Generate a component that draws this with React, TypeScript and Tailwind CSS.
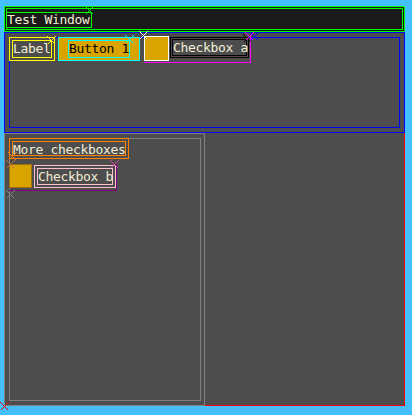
import React from "react";

const FONT = { fontFamily: '"DejaVu Sans Mono", "Liberation Mono", monospace' };

function Cross({ x, y, color }: { x: number; y: number; color: string }) {
  return (
    <svg
      className="absolute pointer-events-none"
      style={{ left: x - 4, top: y - 4 }}
      width={9}
      height={9}
      viewBox="0 0 9 9"
      shapeRendering="crispEdges"
    >
      <line x1="0.5" y1="0.5" x2="8.5" y2="8.5" stroke={color} strokeWidth="1" />
      <line x1="8.5" y1="0.5" x2="0.5" y2="8.5" stroke={color} strokeWidth="1" />
    </svg>
  );
}

export default function App() {
  return (
    <div
      className="relative w-[412px] h-[415px] overflow-hidden bg-[#44bfff] pl-[4px] pt-[6px] text-[13px] tracking-[-0.33px] text-[#f2eed6]"
      style={FONT}
    >
      <div className="w-[401px] flex flex-col">
        {/* Title bar */}
        <div className="h-[26px] border border-[#00ff00] bg-[#1a1a1a] p-px">
          <div className="h-full border border-[#00ff00]">
            <div className="-ml-px mt-[3px] w-[86px] h-[16px] border border-[#00ff00] leading-[14px] whitespace-nowrap">
              Test Window
            </div>
          </div>
        </div>

        {/* Body */}
        <div className="h-[374px] bg-[#4d4d4d] flex flex-col">
          {/* Top panel */}
          <div className="h-[101px] border border-[#0000ff] p-[4px]">
            <div className="h-full border border-[#0000ff]">
              <div className="-ml-px -mt-px flex items-start">
                <div className="w-[46px] h-[24px] border border-[#ffff00] p-[2px]">
                  <div className="h-full border border-[#ffff00] leading-[16px] whitespace-nowrap">
                    Label
                  </div>
                </div>
                <div className="ml-[3px] w-[82px] h-[24px] border border-[#00ffff] bg-[#daa400] px-[9px] py-[2px]">
                  <div className="h-full border border-[#00ffff] leading-[16px] whitespace-nowrap text-black">
                    Button 1
                  </div>
                </div>
                <div className="ml-[4px] -mt-px w-[107px] h-[27px] border-b border-r border-[#ff00ff] flex items-start">
                  <div className="w-[25px] h-[25px] border border-white bg-[#daa400]" />
                  <div className="ml-[1px] mt-px w-[79px] h-[21px] border border-black p-px">
                    <div className="h-full border border-black leading-[15px] whitespace-nowrap">
                      Checkbox a
                    </div>
                  </div>
                </div>
              </div>
            </div>
          </div>

          {/* Bottom area */}
          <div className="h-[274px] flex">
            <div className="w-[201px] h-full border border-[#808080] pl-[4px] pt-[4px] pr-[3px] pb-[4px]">
              <div className="h-full border border-[#808080]">
                <div className="-ml-px -mt-px flex flex-col items-start">
                  <div className="w-[120px] h-[21px] border border-[#ff8000] px-[2px] py-[2px]">
                    <div className="h-full border border-[#ff8000] leading-[15px] whitespace-nowrap">
                      More checkboxes
                    </div>
                  </div>
                  <div className="mt-[5px] w-[108px] h-[27px] border-b border-r border-[#800080] flex items-start">
                    <div className="w-[24px] h-[24px] border border-[#9c6e10] bg-[#daa400]" />
                    <div className="ml-[2px] mt-px w-[82px] h-[23px] border border-[#ffc0cb] p-[2px]">
                      <div className="h-full border border-[#ffc0cb] leading-[16px] whitespace-nowrap">
                        Checkbox b
                      </div>
                    </div>
                  </div>
                </div>
              </div>
            </div>
            <div className="flex-1 h-full border-r border-b border-[#ff0000]" />
          </div>
        </div>
      </div>

      <Cross x={89} y={10} color="#00ff00" />
      <Cross x={51} y={40} color="#ffff00" />
      <Cross x={129} y={39} color="#00ffff" />
      <Cross x={143} y={35} color="#ffffff" />
      <Cross x={247} y={38} color="#000000" />
      <Cross x={249} y={36} color="#ff00ff" />
      <Cross x={254} y={36} color="#0000ff" />
      <Cross x={12} y={156} color="#ff8000" />
      <Cross x={10} y={164} color="#c07030" />
      <Cross x={114} y={164} color="#d040a0" />
      <Cross x={10} y={194} color="#808080" />
      <Cross x={4} y={406} color="#ff0000" />
    </div>
  );
}
